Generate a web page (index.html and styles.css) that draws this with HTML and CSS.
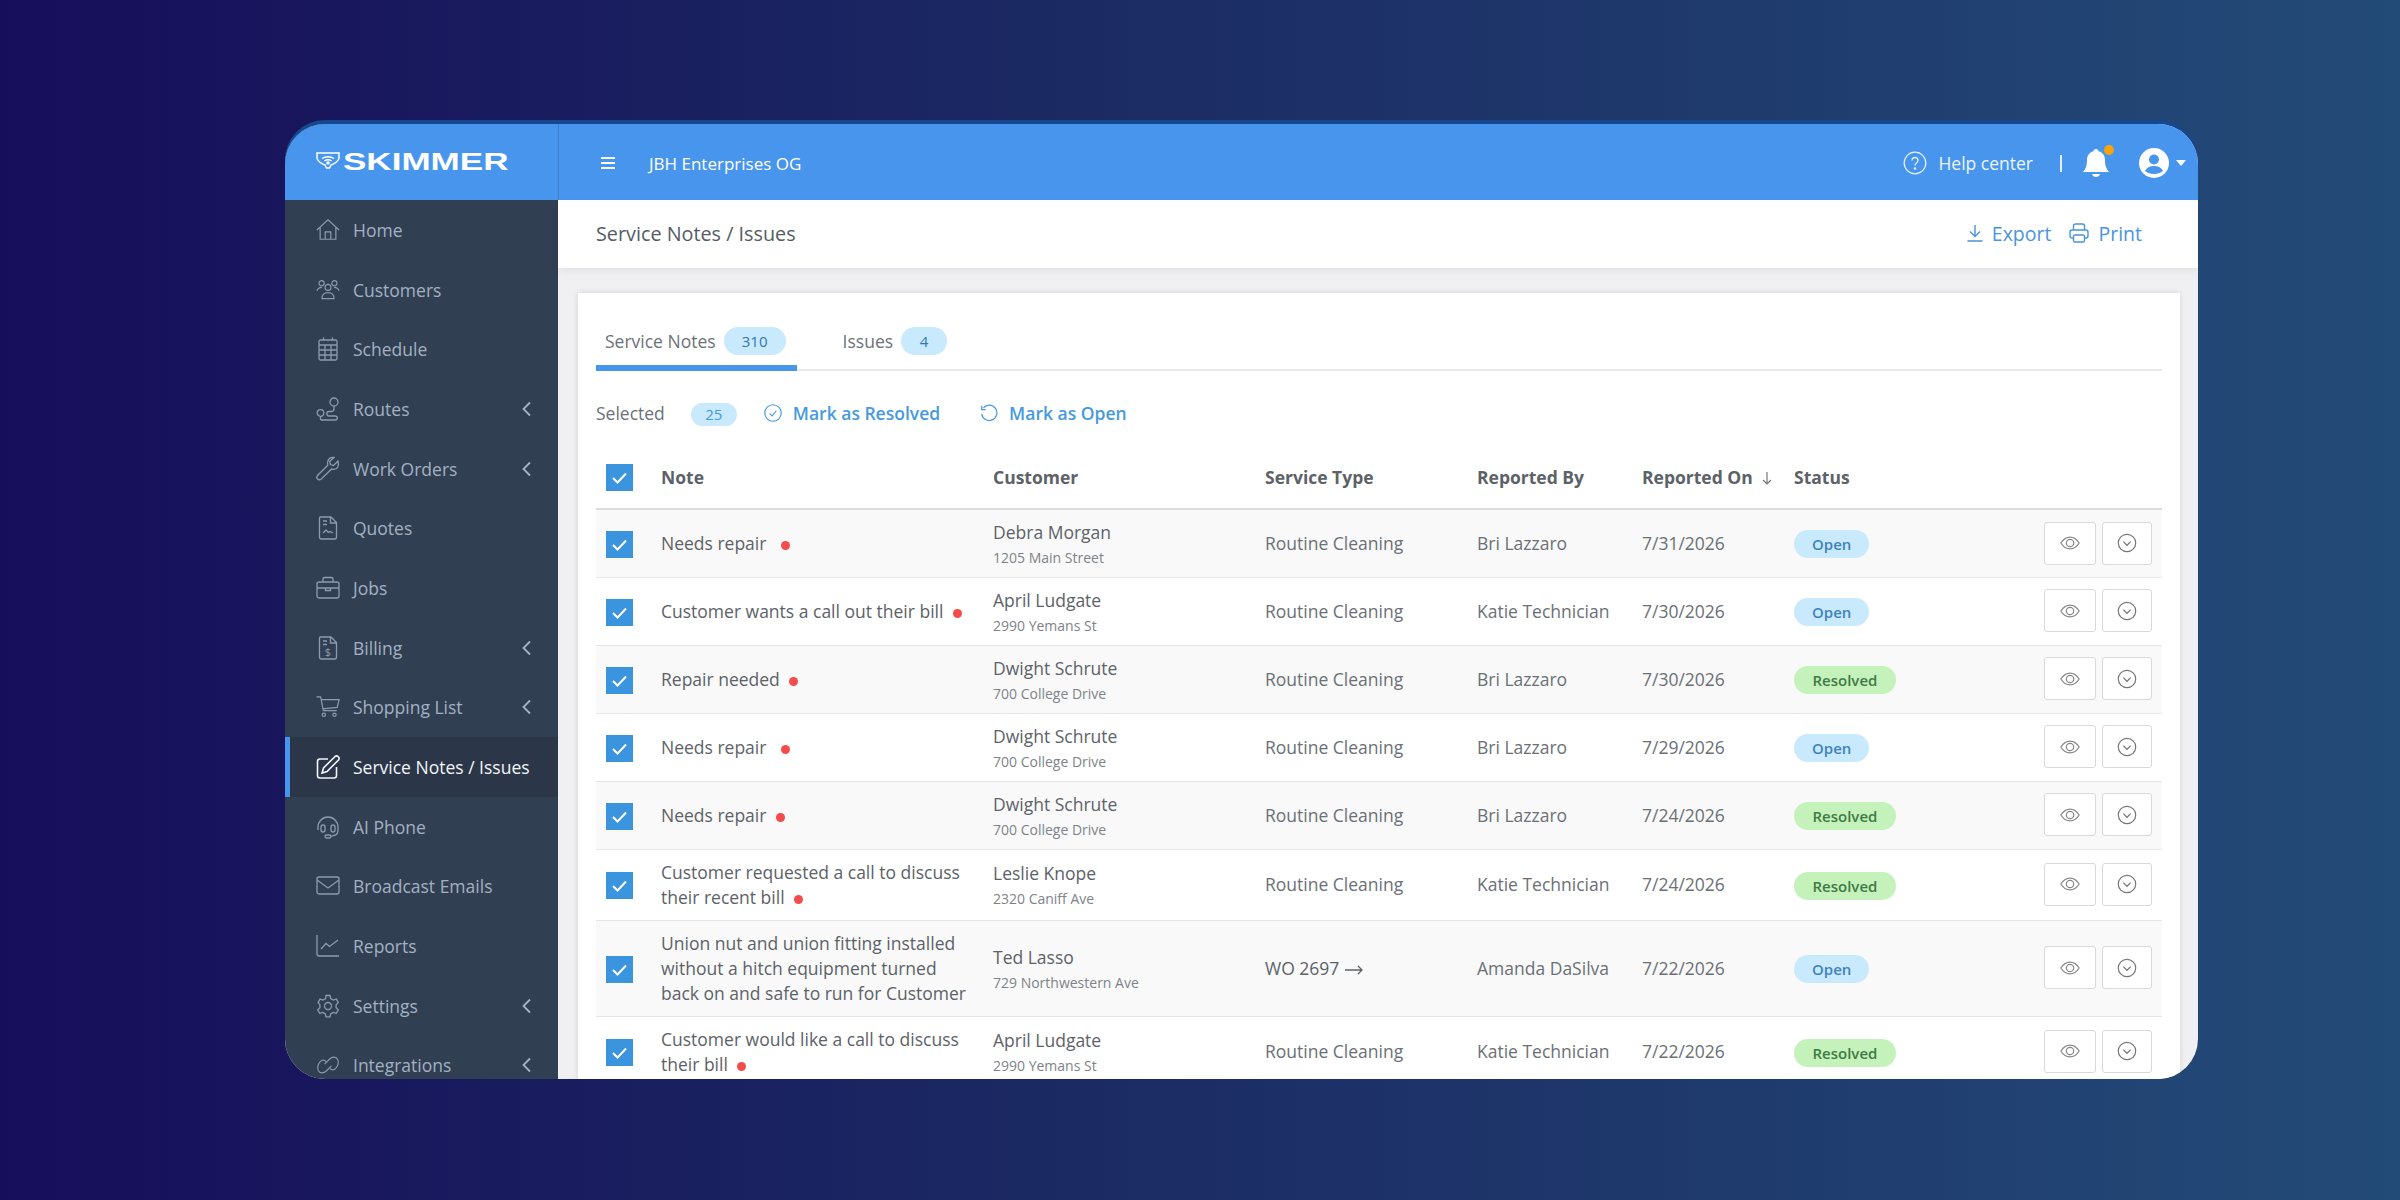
FILE: index.html
```html
<!DOCTYPE html>
<html lang="en">
<head>
  <meta charset="UTF-8">
  <title>Service Notes / Issues - Skimmer</title>
  <link rel="stylesheet" href="styles.css">
</head>
<body>

<svg class="defs" width="0" height="0">
  <symbol id="i-check" viewBox="0 0 27 27"><path d="M7 14l4.500 4.500L20 9.500" fill="none" stroke="#fff" stroke-width="2"/></symbol>
  <symbol id="i-eye" viewBox="0 0 24 24"><path d="M2 12c2.500-4 5.800-6.500 10-6.500S19.500 8 22 12c-2.500 4-5.800 6.500-10 6.500S4.500 16 2 12z" fill="none" stroke="#888" stroke-width="1.300"/><circle cx="12" cy="12" r="4" fill="none" stroke="#888" stroke-width="1.300"/></symbol>
  <symbol id="i-more" viewBox="0 0 24 24"><circle cx="12" cy="12" r="9.500" fill="none" stroke="#777" stroke-width="1.300"/><path d="M8 10.500l4 4 4-4" fill="none" stroke="#777" stroke-width="1.300"/></symbol>
  <symbol id="i-back" viewBox="0 0 12 20"><path d="M10 3.500L3.500 10l6.500 6.500" fill="none" stroke="#a6b4c4" stroke-width="1.800"/></symbol>
</svg>

<div class="stage">
  <div class="window">

    <aside class="sidebar">
      <div class="logo">
        <svg width="24" height="19" viewBox="0 0 24 19" fill="none" stroke="#fff" stroke-width="1.500"><path d="M1 1h22v5c0 3-5 6-8 7l-1.500 3h-3L9 13C6 12 1 9 1 6z"/><path d="M6 6.500c3.500-2.500 8.500-2.500 12 0M8.500 9c2-1.500 5-1.500 7 0"/><circle cx="12" cy="11" r="1" fill="#fff"/></svg>
        <span class="logo-text">SKIMMER</span>
      </div>
      <nav class="nav">
        <a class="nav-item"><svg class="nav-icon" viewBox="0 0 26 24"><path d="M1 12L13 1l12 11M4.500 9.500V22h17V9.500M10 22v-8h6v8"/></svg>Home</a>
        <a class="nav-item"><svg class="nav-icon" viewBox="0 0 28 24"><circle cx="6.500" cy="4" r="3"/><circle cx="21.500" cy="4" r="3"/><circle cx="14" cy="9" r="3.500"/><path d="M1 13c1-3 3-4 6-4M27 13c-1-3-3-4-6-4M7 22c0-5 3-7 7-7s7 2 7 7z"/></svg>Customers</a>
        <a class="nav-item"><svg class="nav-icon" viewBox="0 0 24 24"><rect x="3" y="3" width="18" height="20" rx="1.500"/><path d="M3 8h18M3 13h18M3 18h18M9 8v15M15 8v15M7.500 0.500V3M16.500 0.500V3"/></svg>Schedule</a>
        <a class="nav-item"><svg class="nav-icon" viewBox="0 0 24 24"><circle cx="18" cy="5" r="4"/><path d="M18 9l0 3c0 2-1 2.500-3 2.500h-2c-3 0-3 4.500 0 4.500h6c3 0 3 4 0 4H5"/><circle cx="4.500" cy="16" r="3.300"/><path d="M4.500 19.300V23"/></svg>Routes<svg class="nav-back"><use href="#i-back"/></svg></a>
        <a class="nav-item"><svg class="nav-icon" viewBox="0 0 24 24"><path d="M22 4l-4.500 4.500-3-1-1-3L18 0.500c-3-.8-7 1.500-6.500 6l.3 1.800L1.500 18.500c-2 3 1 5.500 3.800 3.500L15.500 12l2 .3c4 .3 6-3.800 4.500-8.300z"/></svg>Work Orders<svg class="nav-back"><use href="#i-back"/></svg></a>
        <a class="nav-item"><svg class="nav-icon" viewBox="0 0 24 24"><path d="M4 1h11l5.500 5.500V21a2 2 0 0 1-2 2H5.500a2 2 0 0 1-2-2V2zM14.500 1v6h6M7 5h4M7 8.500h4M7 17l3-3 2.500 2.500 1.500-1 3 1.500"/></svg>Quotes</a>
        <a class="nav-item"><svg class="nav-icon" viewBox="0 0 24 24"><rect x="1" y="6" width="22" height="16" rx="2"/><path d="M7 6V3a1.500 1.500 0 0 1 1.500-1.500h7A1.500 1.500 0 0 1 17 3v3M1 12h22M9.500 12v2.500h5V12"/></svg>Jobs</a>
        <a class="nav-item"><svg class="nav-icon" viewBox="0 0 24 24"><path d="M4 1h11l5.500 5.500V21a2 2 0 0 1-2 2H5.500a2 2 0 0 1-2-2V2zM14.500 1v6h6M7 5h4M7 8.500h4"/><text class="nav-dollar" x="12" y="20" text-anchor="middle">$</text></svg>Billing<svg class="nav-back"><use href="#i-back"/></svg></a>
        <a class="nav-item"><svg class="nav-icon" viewBox="0 0 26 24"><path d="M0.500 1H5l3 15h14.500M6 4h19l-2 8.500-16 1.500"/><circle cx="8.500" cy="20.500" r="1.800"/><circle cx="20" cy="20.500" r="1.800"/></svg>Shopping List<svg class="nav-back"><use href="#i-back"/></svg></a>
        <a class="nav-item is-active"><svg class="nav-icon" viewBox="0 0 24 24"><path d="M12 4H4a2.500 2.500 0 0 0-2.500 2.500v14A2.500 2.500 0 0 0 4 23h14a2.500 2.500 0 0 0 2.500-2.500V12"/><path d="M19 1.500a2.500 2.500 0 0 1 3.500 3.500L11 16.500l-5 1.500 1.500-5z"/></svg>Service Notes / Issues</a>
        <a class="nav-item"><svg class="nav-icon" viewBox="0 0 24 24"><path d="M2 15v-3a10 10 0 0 1 20 0v3c0 3-1.500 5-4 5.500l-3.500 1"/><rect x="5" y="10" width="4" height="7" rx="2"/><rect x="15" y="10" width="4" height="7" rx="2"/><rect x="9" y="20" width="6" height="3" rx="1.500"/></svg>AI Phone</a>
        <a class="nav-item"><svg class="nav-icon" viewBox="0 0 24 24"><rect x="1" y="3" width="22" height="17" rx="2"/><path d="M1 6l11 8 11-8"/></svg>Broadcast Emails</a>
        <a class="nav-item"><svg class="nav-icon" viewBox="0 0 24 24"><path d="M1 1v19a2 2 0 0 0 2 2h20M5 15l5-5.500 3.500 3L22 6"/></svg>Reports</a>
        <a class="nav-item"><svg class="nav-icon" viewBox="0 0 24 24"><circle cx="12" cy="12" r="3.500"/><path d="M10 1.500h4l.7 3 2.600 1.500 3-.9 2 3.400-2.200 2.200v3l2.200 2.100-2 3.500-3-.9-2.600 1.500-.7 3h-4l-.7-3-2.600-1.500-3 .9-2-3.500 2.200-2.100v-3L2.100 8.500l2-3.400 3 .9L9.700 4.500z"/></svg>Settings<svg class="nav-back"><use href="#i-back"/></svg></a>
        <a class="nav-item"><svg class="nav-icon" viewBox="0 0 28 24"><path d="M12 8c-3-3-5-2-7 0-3 3-4 8-2 11 2 3 6 3 9 0l6-6"/><path d="M16 16c3 3 5 2 7 0 3-3 4-8 2-11-2-3-6-3-9 0l-6 6"/></svg>Integrations<svg class="nav-back"><use href="#i-back"/></svg></a>
      </nav>
    </aside>

    <div class="main">
      <header class="topbar">
        <svg class="menu-icon" width="16" height="14" viewBox="0 0 16 14"><path d="M1 2h14M1 7h14M1 12h14" stroke="#fff" stroke-width="2"/></svg>
        <span class="company">JBH Enterprises OG</span>
        <div class="topbar-right">
          <svg width="24" height="24" viewBox="0 0 24 24" fill="none" stroke="#e3effc" stroke-width="1.300"><circle cx="12" cy="12" r="10.800"/><path d="M9 9.500c0-4 6-4 6 0 0 2.500-3 2.500-3 5"/><circle cx="12" cy="17.500" r=".6"/></svg>
          <span class="help">Help center</span>
          <span class="divider"></span>
          <span class="bell">
            <svg width="28" height="30" viewBox="0 0 28 30" fill="#fff"><path d="M14 1c1.500 0 2.500 1 2.500 2.300C21 4.500 23 8 23 12c0 6 1.500 9 4 12H1c2.500-3 4-6 4-12 0-4 2-7.500 6.500-8.700C11.500 2 12.500 1 14 1z"/><path d="M10 26h8c-.5 2-2 3-4 3s-3.500-1-4-3z"/></svg>
            <span class="bell-dot"></span>
          </span>
          <svg class="avatar" width="30" height="30" viewBox="0 0 30 30"><circle cx="15" cy="15" r="15" fill="#fff"/><circle cx="15" cy="11.500" r="5" fill="#4795ed"/><path d="M6 23c2-4 5.500-5 9-5s7 1 9 5c-2.500 2-5.500 3-9 3s-6.500-1-9-3z" fill="#4795ed"/></svg>
          <span class="caret"></span>
        </div>
      </header>

      <div class="titlebar">
        <h1>Service Notes / Issues</h1>
        <div class="title-actions">
          <a class="title-link"><svg width="16" height="18" viewBox="0 0 16 18" fill="none" stroke="#4a94dc" stroke-width="1.400"><path d="M8 1v11M3 7.500l5 5 5-5M0.500 17h15"/></svg>Export</a>
          <a class="title-link"><svg width="20" height="20" viewBox="0 0 20 20" fill="none" stroke="#4a94dc" stroke-width="1.400"><path d="M4.500 7V3a2 2 0 0 1 2-2h7a2 2 0 0 1 2 2v4M4.500 15H3a2 2 0 0 1-2-2V9a2 2 0 0 1 2-2h14a2 2 0 0 1 2 2v4a2 2 0 0 1-2 2h-1.500"/><rect x="4.500" y="12" width="11" height="7" rx="1.500"/></svg>Print</a>
        </div>
      </div>

      <div class="content">
        <section class="card">
          <div class="tabs">
            <a class="tab is-active">Service Notes <span class="count">310</span></a>
            <a class="tab">Issues <span class="count count-small">4</span></a>
          </div>

          <div class="bulk">
            <span class="bulk-label">Selected</span>
            <span class="bulk-count">25</span>
            <a class="bulk-link"><svg width="18" height="18" viewBox="0 0 16 16" fill="none" stroke="#459ade" stroke-width="1"><circle cx="8" cy="8" r="7.300"/><path d="M5 8.300l2.200 2.200L11 6"/></svg>Mark as Resolved</a>
            <a class="bulk-link"><svg width="18" height="18" viewBox="0 0 16 16" fill="none" stroke="#459ade" stroke-width="1.100"><path d="M3 3.500A6.800 6.800 0 1 1 1.500 9M1.500 1.500V5H5"/></svg>Mark as Open</a>
          </div>

          <table class="notes">
            <thead>
              <tr>
                <th class="col-check"><span class="check"><svg><use href="#i-check"/></svg></span></th>
                <th class="col-note">Note</th>
                <th class="col-customer">Customer</th>
                <th class="col-type">Service Type</th>
                <th class="col-by">Reported By</th>
                <th class="col-on">Reported On <svg class="sort" width="12" height="15" viewBox="0 0 12 15" fill="none" stroke="#777" stroke-width="1.200"><path d="M6 1v12M2 9l4 4 4-4"/></svg></th>
                <th>Status</th>
                <th class="col-actions"></th>
              </tr>
            </thead>
            <tbody>
              <tr>
                <td><span class="check"><svg><use href="#i-check"/></svg></span></td>
                <td class="note">Needs repair <span class="dot dot-wide"></span></td>
                <td><div class="name">Debra Morgan</div><div class="addr">1205 Main Street</div></td>
                <td>Routine Cleaning</td>
                <td>Bri Lazzaro</td>
                <td>7/31/2026</td>
                <td><span class="status open">Open</span></td>
                <td class="actions"><span class="act act-eye"><svg><use href="#i-eye"/></svg></span><span class="act"><svg><use href="#i-more"/></svg></span></td>
              </tr>
              <tr>
                <td><span class="check"><svg><use href="#i-check"/></svg></span></td>
                <td class="note">Customer wants a call out their bill <span class="dot"></span></td>
                <td><div class="name">April Ludgate</div><div class="addr">2990 Yemans St</div></td>
                <td>Routine Cleaning</td>
                <td>Katie Technician</td>
                <td>7/30/2026</td>
                <td><span class="status open">Open</span></td>
                <td class="actions"><span class="act act-eye"><svg><use href="#i-eye"/></svg></span><span class="act"><svg><use href="#i-more"/></svg></span></td>
              </tr>
              <tr>
                <td><span class="check"><svg><use href="#i-check"/></svg></span></td>
                <td class="note">Repair needed <span class="dot"></span></td>
                <td><div class="name">Dwight Schrute</div><div class="addr">700 College Drive</div></td>
                <td>Routine Cleaning</td>
                <td>Bri Lazzaro</td>
                <td>7/30/2026</td>
                <td><span class="status resolved">Resolved</span></td>
                <td class="actions"><span class="act act-eye"><svg><use href="#i-eye"/></svg></span><span class="act"><svg><use href="#i-more"/></svg></span></td>
              </tr>
              <tr>
                <td><span class="check"><svg><use href="#i-check"/></svg></span></td>
                <td class="note">Needs repair <span class="dot dot-wide"></span></td>
                <td><div class="name">Dwight Schrute</div><div class="addr">700 College Drive</div></td>
                <td>Routine Cleaning</td>
                <td>Bri Lazzaro</td>
                <td>7/29/2026</td>
                <td><span class="status open">Open</span></td>
                <td class="actions"><span class="act act-eye"><svg><use href="#i-eye"/></svg></span><span class="act"><svg><use href="#i-more"/></svg></span></td>
              </tr>
              <tr>
                <td><span class="check"><svg><use href="#i-check"/></svg></span></td>
                <td class="note">Needs repair <span class="dot"></span></td>
                <td><div class="name">Dwight Schrute</div><div class="addr">700 College Drive</div></td>
                <td>Routine Cleaning</td>
                <td>Bri Lazzaro</td>
                <td>7/24/2026</td>
                <td><span class="status resolved">Resolved</span></td>
                <td class="actions"><span class="act act-eye"><svg><use href="#i-eye"/></svg></span><span class="act"><svg><use href="#i-more"/></svg></span></td>
              </tr>
              <tr>
                <td><span class="check"><svg><use href="#i-check"/></svg></span></td>
                <td class="note">Customer requested a call to discuss<br>their recent bill <span class="dot"></span></td>
                <td><div class="name">Leslie Knope</div><div class="addr">2320 Caniff Ave</div></td>
                <td>Routine Cleaning</td>
                <td>Katie Technician</td>
                <td>7/24/2026</td>
                <td><span class="status resolved">Resolved</span></td>
                <td class="actions"><span class="act act-eye"><svg><use href="#i-eye"/></svg></span><span class="act"><svg><use href="#i-more"/></svg></span></td>
              </tr>
              <tr>
                <td><span class="check"><svg><use href="#i-check"/></svg></span></td>
                <td class="note">Union nut and union fitting installed<br>without a hitch equipment turned<br>back on and safe to run for Customer</td>
                <td><div class="name">Ted Lasso</div><div class="addr">729 Northwestern Ave</div></td>
                <td class="wo">WO 2697 <svg class="wo-arrow" width="20" height="12" viewBox="0 0 20 12" fill="none" stroke="#5c6268" stroke-width="1.300"><path d="M1 6h17M14 2l4 4-4 4"/></svg></td>
                <td>Amanda DaSilva</td>
                <td>7/22/2026</td>
                <td><span class="status open">Open</span></td>
                <td class="actions"><span class="act act-eye"><svg><use href="#i-eye"/></svg></span><span class="act"><svg><use href="#i-more"/></svg></span></td>
              </tr>
              <tr>
                <td><span class="check"><svg><use href="#i-check"/></svg></span></td>
                <td class="note">Customer would like a call to discuss<br>their bill <span class="dot"></span></td>
                <td><div class="name">April Ludgate</div><div class="addr">2990 Yemans St</div></td>
                <td>Routine Cleaning</td>
                <td>Katie Technician</td>
                <td>7/22/2026</td>
                <td><span class="status resolved">Resolved</span></td>
                <td class="actions"><span class="act act-eye"><svg><use href="#i-eye"/></svg></span><span class="act"><svg><use href="#i-more"/></svg></span></td>
              </tr>
            </tbody>
          </table>
        </section>
      </div>
    </div>

  </div>
</div>

</body>
</html>
```

FILE: styles.css
```css
* {
  box-sizing: border-box;
}

body {
  margin: 0;
  font-family: "Open Sans", "Liberation Sans", sans-serif;
  color: #555b62;
}

.defs {
  position: absolute;
}

.stage {
  height: 1200px;
  padding: 124px 202px 121px 285px;
  background: linear-gradient(90deg, #170e5b 0%, #1b2a63 45%, #234b78 100%);
}

.window {
  display: flex;
  height: 955px;
  overflow: hidden;
  border-radius: 40px;
  background: #f0f0f2;
  box-shadow: 0 -4px 0 #17478f;
}

/* sidebar */
.sidebar {
  flex: 0 0 273px;
  background: #313f52;
  overflow: hidden;
}

.logo {
  display: flex;
  align-items: center;
  gap: 3px;
  height: 76px;
  padding: 0 0 1px 31px;
  background: #4795ed;
}

.logo-text {
  font-family: "Liberation Sans", sans-serif;
  font-size: 24px;
  font-weight: 700;
  line-height: 1;
  color: #fff;
  transform: scaleX(1.46);
  transform-origin: left center;
}

.nav-item {
  display: flex;
  align-items: center;
  height: 59.700px;
  padding: 0 26px 0 31px;
  font-size: 17.500px;
  color: #a3b1c2;
}

.nav-item.is-active {
  background: #2b3648;
  color: #f2f5f8;
  border-left: 5px solid #4795ed;
  padding-left: 26px;
}

.nav-icon {
  flex: 0 0 24px;
  width: 24px;
  height: 24px;
  margin-right: 13px;
  overflow: visible;
  fill: none;
  stroke: #8c9cae;
  stroke-width: 1.300;
}

.is-active .nav-icon {
  stroke: #f2f5f8;
  stroke-width: 1.600;
}

.nav-dollar {
  font-size: 11px;
  fill: #8c9cae;
  stroke: none;
}

.nav-back {
  width: 12px;
  height: 20px;
  margin-left: auto;
}

/* top bar */
.main {
  flex: 1;
  min-width: 0;
  display: flex;
  flex-direction: column;
}

.topbar {
  display: flex;
  align-items: center;
  flex: 0 0 76px;
  padding: 2px 12px 0 41px;
  background: #4795ed;
  border-left: 1px solid #3f7fc9;
  color: #fff;
}

.company {
  margin-left: 33px;
  font-size: 17px;
}

.topbar-right {
  display: flex;
  align-items: center;
  margin-left: auto;
}

.help {
  margin-left: 11px;
  font-size: 17.500px;
  color: #eef5fd;
}

.divider {
  width: 2px;
  height: 17px;
  margin: 0 20px 0 27px;
  background: #e3effc;
}

.bell {
  position: relative;
  display: flex;
  margin-right: 29px;
}

.bell-dot {
  position: absolute;
  top: -3px;
  right: -4px;
  width: 10px;
  height: 10px;
  border-radius: 50%;
  background: #f9a308;
}

.caret {
  width: 0;
  height: 0;
  margin-left: 7px;
  border: 5px solid transparent;
  border-top: 6px solid #fff;
  border-bottom: 0;
}

/* page title */
.titlebar {
  display: flex;
  align-items: center;
  justify-content: space-between;
  flex: 0 0 68px;
  padding: 0 56px 2px 38px;
  background: #fff;
  box-shadow: 0 4px 8px rgba(0,0,0,0.05);
}

.titlebar h1 {
  margin: 0;
  font-size: 19.800px;
  font-weight: 400;
}

.title-actions {
  display: flex;
  gap: 18px;
}

.title-link {
  display: flex;
  align-items: center;
  gap: 9px;
  font-size: 19.500px;
  color: #4a94dc;
}

/* card */
.content {
  flex: 1;
  min-height: 0;
  padding: 25px 18px 0 20px;
}

.card {
  height: 800px;
  padding: 0 18px 0 18px;
  background: #fff;
  box-shadow: 0 0 6px rgba(0,0,0,0.12);
}

.tabs {
  display: flex;
  align-items: flex-end;
  gap: 37px;
  height: 78px;
  border-bottom: 2px solid #e8e8e8;
}

.tab {
  display: flex;
  align-items: center;
  gap: 8px;
  height: 48px;
  padding: 0 11px 13px 9px;
  margin-bottom: -2px;
  font-size: 17.500px;
  color: #6c7278;
}

.tab.is-active {
  border-bottom: 6px solid #4795ed;
  padding-bottom: 7px;
}

.count {
  width: 62px;
  height: 28px;
  border-radius: 14px;
  background: #c9e9fd;
  font-size: 15px;
  line-height: 28px;
  text-align: center;
  color: #2f78b5;
}

.count-small {
  width: 46px;
}

.bulk {
  display: flex;
  align-items: center;
  height: 74px;
  padding-top: 10px;
  font-size: 17.500px;
}

.bulk-label {
  color: #6c7278;
}

.bulk-count {
  width: 46px;
  height: 23px;
  margin: 3px 27px 0 26px;
  border-radius: 12px;
  background: #c9e9fd;
  font-size: 15px;
  line-height: 23px;
  text-align: center;
  color: #459ade;
}

.bulk-link {
  display: flex;
  align-items: center;
  gap: 11px;
  margin-right: 40px;
  font-weight: 600;
  color: #459ade;
}

/* table */
.notes {
  width: 100%;
  table-layout: fixed;
  border-collapse: collapse;
  font-size: 17.500px;
}

.notes th {
  height: 64px;
  padding: 0;
  border-bottom: 2px solid #dcdcdc;
  text-align: left;
  font-weight: 700;
  font-size: 17.500px;
  color: #5c6268;
}

.notes td {
  height: 68px;
  padding: 9px 0;
  border-bottom: 1px solid #e6e6e6;
  color: #6a7076;
  line-height: 25px;
}

.notes tbody tr:nth-child(odd) {
  background: #f9f9f9;
}

.col-check { width: 65px; }
.col-note { width: 332px; }
.col-customer { width: 272px; }
.col-type { width: 212px; }
.col-by { width: 165px; }
.col-on { width: 152px; }
.col-actions { width: 260px; }

.check {
  display: block;
  width: 27px;
  height: 27px;
  margin: 2px 0 0 10px;
  background: #3a94de;
}

.check svg {
  display: block;
  width: 27px;
  height: 27px;
}

.notes td.note {
  padding: 10px 20px 10px 0;
  color: #5c6268;
}

.dot {
  display: inline-block;
  width: 9px;
  height: 9px;
  margin-left: 5px;
  border-radius: 50%;
  background: #f44b4b;
}

.dot-wide {
  margin-left: 10px;
}

.name {
  line-height: 25px;
  color: #5c6268;
}

.addr {
  margin-top: 4px;
  font-size: 14px;
  line-height: 18px;
  color: #7d8388;
}

.notes td.wo {
  color: #5c6268;
}

.wo-arrow {
  vertical-align: -1px;
}

.sort {
  margin-left: 4px;
  vertical-align: -2px;
}

.status {
  display: block;
  width: fit-content;
  height: 28px;
  margin-top: 2px;
  padding: 0 18px;
  border-radius: 14px;
  font-size: 15px;
  font-weight: 600;
  line-height: 28px;
}

.status.open {
  background: #c9e9fd;
  color: #3f83bd;
}

.status.resolved {
  padding: 0 18.500px;
  background: #c5f2bb;
  color: #3f7a45;
}

.actions {
  text-align: right;
  padding-right: 10px !important;
  font-size: 0;
}

.act {
  display: inline-flex;
  align-items: center;
  justify-content: center;
  width: 50px;
  height: 43px;
  margin: 2px 0 0 6px;
  border: 1px solid #d9d9d9;
  border-radius: 3px;
  background: #fff;
}

.act-eye {
  width: 52px;
}

.act svg {
  width: 22px;
  height: 22px;
}
```
